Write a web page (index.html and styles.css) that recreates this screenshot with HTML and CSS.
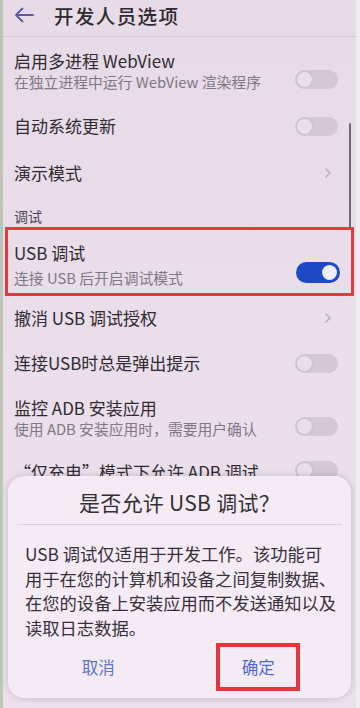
FILE: index.html
```html
<!DOCTYPE html>
<html lang="zh-CN">
<head>
<meta charset="utf-8">
<title>开发人员选项</title>
<link rel="stylesheet" href="styles.css">
</head>
<body>
<div class="screen">
  <header class="topbar">
    <svg class="back" width="20" height="16" viewBox="0 0 20 16"><path d="M19 8H2M8.5 1.5L2 8l6.5 6.5" fill="none" stroke="#5b58a8" stroke-width="1.8" stroke-linecap="round" stroke-linejoin="round"/></svg>
    <h1 class="title">开发人员选项</h1>
  </header>
  <div class="list">
    <div class="row two r1">
      <div class="txt"><div class="main">启用多进程 WebView</div><div class="sub">在独立进程中运行 WebView 渲染程序</div></div>
      <span class="toggle"></span>
    </div>
    <div class="row r2">
      <div class="txt"><div class="main">自动系统更新</div></div>
      <span class="toggle"></span>
    </div>
    <div class="row r3">
      <div class="txt"><div class="main">演示模式</div></div>
      <svg class="chev" width="8" height="12" viewBox="0 0 8 12"><path d="M1.5 1.5L6 6l-4.5 4.5" fill="none" stroke="#b7acb6" stroke-width="1.4"/></svg>
    </div>
    <div class="section">调试</div>
    <div class="row two usb">
      <div class="txt"><div class="main">USB 调试</div><div class="sub">连接 USB 后开启调试模式</div></div>
      <span class="toggle on"></span>
    </div>
    <div class="row r4">
      <div class="txt"><div class="main">撤消 USB 调试授权</div></div>
      <svg class="chev" width="8" height="12" viewBox="0 0 8 12"><path d="M1.5 1.5L6 6l-4.5 4.5" fill="none" stroke="#b7acb6" stroke-width="1.4"/></svg>
    </div>
    <div class="row r5">
      <div class="txt"><div class="main">连接USB时总是弹出提示</div></div>
      <span class="toggle"></span>
    </div>
    <div class="row two r6">
      <div class="txt"><div class="main">监控 ADB 安装应用</div><div class="sub">使用 ADB 安装应用时，需要用户确认</div></div>
      <span class="toggle"></span>
    </div>
    <div class="row r7">
      <div class="txt"><div class="main">“仅充电”模式下允许 ADB 调试</div></div>
      <span class="toggle"></span>
    </div>
  </div>
  <div class="scrollbar"></div>

  <div class="dialog">
    <div class="dlg-title">是否允许 USB 调试？</div>
    <div class="dlg-line"></div>
    <p class="dlg-body">USB 调试仅适用于开发工作。该功能可<br>用于在您的计算机和设备之间复制数据、<br>在您的设备上安装应用而不发送通知以及<br>读取日志数据。</p>
    <div class="dlg-btns">
      <div class="btn-cell"><span class="btn">取消</span></div>
      <div class="btn-cell"><span class="btn ok">确定</span></div>
    </div>
  </div>
</div>
</body>
</html>
```

FILE: styles.css
```css
* { box-sizing: border-box; margin: 0; padding: 0; }
html, body { width: 360px; height: 708px; overflow: hidden; }
body {
  background: #e8dce8;
  font-family: "Noto Sans CJK SC", "Noto Sans", sans-serif;
  color: #2f2b30;
}
.screen {
  position: relative;
  width: 360px;
  height: 708px;
  background: linear-gradient(#e7dbe7, #eadfea 60%, #ece0ec);
  border-left: 3px solid #bcc6b8;
  border-right: 4px solid #f1ecf0;
  overflow: hidden;
}
.topbar {
  height: 37px;
  display: flex;
  align-items: center;
  padding-left: 11px;
  padding-bottom: 6px;
  border-bottom: 1px solid #d6c9d6;
}
.back { margin-right: 20px; }
.title {
  font-size: 19.5px;
  font-weight: 500;
  color: #2e2a2f;
  letter-spacing: 1.4px;
}
.list { padding-right: 9px; }
.row {
  display: flex;
  align-items: center;
  padding-left: 11px;
  padding-right: 9px;
}
.txt { flex: 1; min-width: 0; }
.main { font-size: 17px; line-height: 22px; color: #2f2b30; white-space: nowrap; }
.sub { font-size: 14.8px; line-height: 20px; color: #807884; white-space: nowrap; }
.row.two { align-items: flex-start; }
.row.two .toggle { margin-top: 20px; }
.r1 { height: 64px; padding-top: 13px; }
.r1 .sub { margin-top: 0; }
.r2 { height: 50px; }
.r3 { height: 44px; }
.section {
  height: 32px;
  padding: 11px 0 0 11px;
  font-size: 14px;
  line-height: 20px;
  color: #4a4450;
}
.usb {
  height: 69px;
  margin-left: 2px;
  margin-right: -7px;
  padding-left: 6px;
  padding-right: 11px;
  padding-top: 12px;
  border: 3px solid #e4393e;
}
.usb .sub { margin-top: 4px; }
.usb .toggle { margin-top: 13px; }
.r4 { height: 44px; }
.r5 { height: 46px; }
.r6 { height: 66px; padding-top: 11px; }
.r6 .sub { margin-top: 0; }
.r6 .toggle { margin-top: 16px; }
.r7 { height: 44px; align-items: flex-start; padding-top: 9px; }
.chev { margin-right: 6px; }
.toggle {
  position: relative;
  flex: none;
  width: 43px;
  height: 19px;
  border-radius: 10px;
  background: #d5c8d5;
}
.toggle::after {
  content: "";
  position: absolute;
  left: 2px;
  top: 2px;
  width: 15px;
  height: 15px;
  border-radius: 50%;
  background: #e9dfe9;
  box-shadow: 0 0 0 1px #cbbfcb;
}
.toggle.on { background: #1d48c6; height: 21px; width: 44px; border-radius: 11px; }
.toggle.on::after { left: auto; right: 3px; top: 3px; background: #eef0f8; box-shadow: none; }
.scrollbar {
  position: absolute;
  left: 346px;
  top: 123px;
  width: 2px;
  height: 105px;
  background: #6f6a70;
  border-radius: 1px;
}
.dialog {
  position: absolute;
  left: 5px;
  right: 5px;
  top: 476px;
  height: 222px;
  background: #f5ebf4;
  border-radius: 16px;
  box-shadow: 0 0 6px rgba(80, 60, 80, 0.25);
  padding: 11px 9px 0;
}
.dlg-title {
  text-align: center;
  font-size: 21px;
  line-height: 30px;
  color: #333035;
  letter-spacing: 0.3px;
}
.dlg-line {
  height: 1px;
  background: #dccfdb;
  margin: 7px 0 0;
}
.dlg-body {
  margin-top: 17px;
  padding-left: 8px;
  font-size: 17.3px;
  line-height: 24.5px;
  color: #35313a;
  white-space: nowrap;
}
.dlg-btns {
  display: grid;
  grid-template-columns: 1fr 1fr;
  margin-top: 3px;
}
.btn-cell { display: flex; justify-content: center; }
.btn {
  display: block;
  width: 84px;
  height: 48px;
  padding-top: 12px;
  text-align: center;
  font-size: 16.5px;
  line-height: 24px;
  color: #5a74c2;
}
.btn.ok {
  border: 4px solid #e5353c;
  padding-top: 8px;
  margin-left: -5px;
  color: #4967d0;
}
```
